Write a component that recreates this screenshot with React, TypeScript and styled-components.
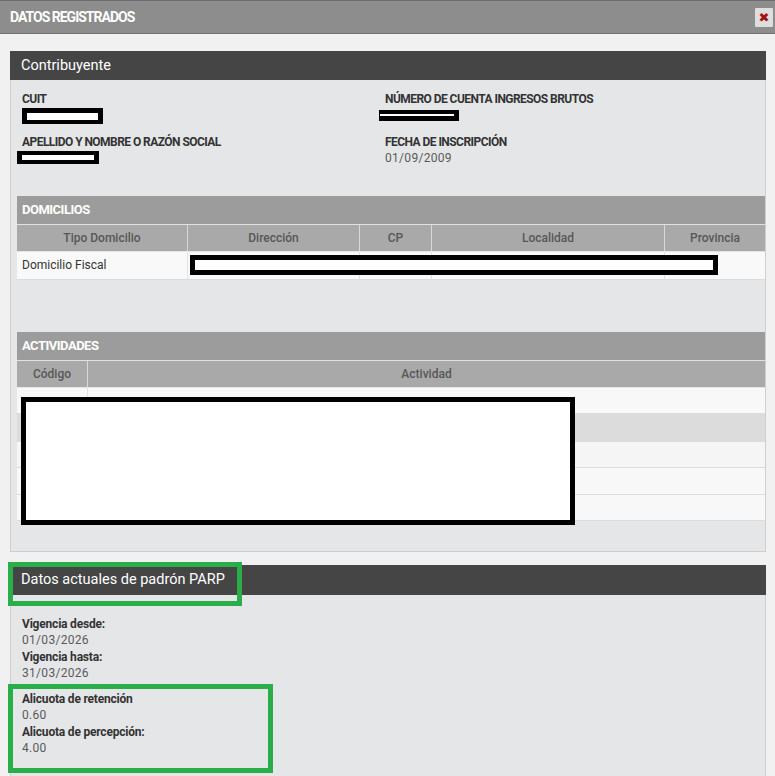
import styled, { createGlobalStyle } from "styled-components";

const GlobalStyle = createGlobalStyle`
  html, body {
    margin: 0;
    padding: 0;
    background: #f1f1f1;
  }
  body {
    font-family: Roboto, "Noto Sans", "Liberation Sans", sans-serif;
  }
`;

const Page = styled.div`
  position: relative;
  width: 775px;
  min-height: 776px;
  overflow: hidden;
  background: #f1f1f1;
`;

const TitleBar = styled.div`
  height: 32px;
  display: flex;
  align-items: center;
  justify-content: space-between;
  padding: 0 2px 0 10px;
  background: #8d8d8d;
  border-top: 1px solid #6c6c6c;
  border-bottom: 1px solid #707070;
`;

const TitleText = styled.span`
  color: #fff;
  font-size: 14px;
  font-weight: 700;
  letter-spacing: -1px;
`;

const CloseButton = styled.button`
  width: 18px;
  height: 19px;
  padding: 0;
  border: none;
  border-radius: 1px;
  background: #dedede;
  color: #a51010;
  font-size: 13px;
  font-weight: 900;
  line-height: 19px;
  font-family: "DejaVu Sans", sans-serif;
  cursor: pointer;
`;

const Body = styled.div`
  padding: 17px 9px 0 10px;
`;

const Panel = styled.section<{ $gap?: number }>`
  margin-top: ${(p) => p.$gap ?? 0}px;
  border: 1px solid #cfcfcf;
  border-top: none;
  background: #e5e6e8;
`;

const PanelHeader = styled.div<{ $h: number }>`
  height: ${(p) => p.$h}px;
  display: flex;
  align-items: center;
  padding-left: 11px;
  margin: 0 -1px;
  background: #454545;
  color: #fff;
  font-size: 14.5px;
`;

const PanelBody = styled.div<{ $pt: number; $pb: number }>`
  padding: ${(p) => p.$pt}px 0 ${(p) => p.$pb}px;
`;

const FieldGrid = styled.div`
  display: grid;
  grid-template-columns: 363px 1fr;
  row-gap: 10px;
  padding-left: 11px;
`;

const Field = styled.div`
  display: flex;
  flex-direction: column;
`;

const Label = styled.div<{ $caps?: boolean }>`
  font-size: 12px;
  font-weight: 700;
  color: #333;
  line-height: 16.5px;
  letter-spacing: ${(p) => (p.$caps ? "-0.55px" : "-0.2px")};
`;

const Value = styled.div`
  font-size: 12px;
  color: #5a5a5a;
  line-height: 16.5px;
  letter-spacing: 0.3px;
`;

const Redaction = styled.div<{ $w: number; $h: number; $x?: number; $y?: number; $b?: string }>`
  box-sizing: border-box;
  width: ${(p) => p.$w}px;
  height: ${(p) => p.$h}px;
  margin-left: ${(p) => p.$x ?? 0}px;
  margin-top: ${(p) => p.$y ?? 0}px;
  background: #fff;
  border-style: solid;
  border-color: #000;
  border-width: ${(p) => p.$b ?? "5px"};
`;

const Overlay = styled(Redaction)<{ $left: number; $top: number }>`
  position: absolute;
  left: ${(p) => p.$left}px;
  top: ${(p) => p.$top}px;
  margin: 0;
`;

const SubSection = styled.div<{ $gap: number }>`
  position: relative;
  margin: ${(p) => p.$gap}px 0 0 6px;
`;

const SubHeader = styled.div`
  height: 28px;
  display: flex;
  align-items: center;
  padding-left: 5px;
  background: #9c9c9c;
  color: #fff;
  font-size: 13px;
  font-weight: 700;
  letter-spacing: -0.5px;
  border-bottom: 1px solid #e2e2e2;
`;

const Table = styled.table`
  width: 100%;
  border-collapse: collapse;
  table-layout: fixed;
`;

const Th = styled.th<{ $w?: number }>`
  width: ${(p) => (p.$w ? `${p.$w}px` : "auto")};
  height: 26px;
  padding: 0;
  background: #a9a9a9;
  color: #575757;
  font-size: 12px;
  font-weight: 500;
  text-align: center;
  border-left: 1px solid #d8d8d8;
  border-bottom: 1px solid #e6e6e6;
  &:first-child {
    border-left: none;
  }
`;

const Row = styled.tr<{ $bg?: string }>`
  background: ${(p) => p.$bg ?? "#f9f9f9"};
`;

const Td = styled.td<{ $h?: number }>`
  height: ${(p) => p.$h ?? 26}px;
  padding: 0 0 0 5px;
  font-size: 12px;
  color: #333;
  border-left: 1px solid #e3e3e3;
  border-bottom: 1px solid #dcdcdc;
  &:first-child {
    border-left: none;
  }
`;

const InfoGroup = styled.div<{ $gap?: number }>`
  margin-top: ${(p) => p.$gap ?? 0}px;
  padding-left: 11px;
`;

const Highlight = styled.div<{ $left: number; $top: number; $w: number; $h: number }>`
  position: absolute;
  box-sizing: border-box;
  left: ${(p) => p.$left}px;
  top: ${(p) => p.$top}px;
  width: ${(p) => p.$w}px;
  height: ${(p) => p.$h}px;
  border: 5px solid #2aae4a;
  pointer-events: none;
`;

const activityRows = [
  { bg: "#f8f8f8", h: 25 },
  { bg: "#dcdcdc", h: 27 },
  { bg: "#f5f5f5", h: 25 },
  { bg: "#f8f8f8", h: 26 },
  { bg: "#f8f8f8", h: 25 },
];

export default function App() {
  return (
    <>
      <GlobalStyle />
      <Page>
        <TitleBar>
          <TitleText>DATOS REGISTRADOS</TitleText>
          <CloseButton aria-label="Cerrar">✖</CloseButton>
        </TitleBar>
        <Body>
          <Panel>
            <PanelHeader $h={29}>Contribuyente</PanelHeader>
            <PanelBody $pt={11} $pb={30}>
              <FieldGrid>
                <Field>
                  <Label $caps>CUIT</Label>
                  <Redaction $w={81} $h={16} $y={0} $b="5px 5px 4px 5px" />
                </Field>
                <Field>
                  <Label $caps>NÚMERO DE CUENTA INGRESOS BRUTOS</Label>
                  <Redaction $w={80} $h={11} $x={-6} $y={2} $b="4px 5px 5px 1px" />
                </Field>
                <Field>
                  <Label $caps>APELLIDO Y NOMBRE O RAZÓN SOCIAL</Label>
                  <Redaction $w={82} $h={13} $x={-5} $y={1} $b="4px 5px 4px 5px" />
                </Field>
                <Field>
                  <Label $caps>FECHA DE INSCRIPCIÓN</Label>
                  <Value>01/09/2009</Value>
                </Field>
              </FieldGrid>

              <SubSection $gap={29}>
                <SubHeader>DOMICILIOS</SubHeader>
                <Table>
                  <thead>
                    <tr>
                      <Th $w={170}>Tipo Domicilio</Th>
                      <Th $w={171}>Dirección</Th>
                      <Th $w={71}>CP</Th>
                      <Th $w={232}>Localidad</Th>
                      <Th>Provincia</Th>
                    </tr>
                  </thead>
                  <tbody>
                    <Row>
                      <Td $h={27}>Domicilio Fiscal</Td>
                      <Td $h={27} />
                      <Td $h={27} />
                      <Td $h={27} />
                      <Td $h={27} />
                    </Row>
                  </tbody>
                </Table>
                <Overlay $left={173} $top={59} $w={528} $h={20} $b="5px" />
              </SubSection>

              <SubSection $gap={52}>
                <SubHeader>ACTIVIDADES</SubHeader>
                <Table>
                  <thead>
                    <tr>
                      <Th $w={70}>Código</Th>
                      <Th>Actividad</Th>
                    </tr>
                  </thead>
                  <tbody>
                    {activityRows.map((r, i) => (
                      <Row key={i} $bg={r.bg}>
                        <Td $h={r.h} />
                        <Td $h={r.h} />
                      </Row>
                    ))}
                  </tbody>
                </Table>
                <Overlay $left={4} $top={65} $w={554} $h={128} $b="5px" />
              </SubSection>
            </PanelBody>
          </Panel>

          <Panel $gap={13}>
            <PanelHeader $h={30}>Datos actuales de padrón PARP</PanelHeader>
            <PanelBody $pt={21} $pb={40}>
              <InfoGroup>
                <Label>Vigencia desde:</Label>
                <Value>01/03/2026</Value>
                <Label>Vigencia hasta:</Label>
                <Value>31/03/2026</Value>
              </InfoGroup>
              <InfoGroup $gap={9}>
                <Label>Alicuota de retención</Label>
                <Value>0.60</Value>
                <Label>Alicuota de percepción:</Label>
                <Value>4.00</Value>
              </InfoGroup>
            </PanelBody>
          </Panel>
        </Body>

        <Highlight $left={8} $top={562} $w={234} $h={44} />
        <Highlight $left={8} $top={684} $w={265} $h={89} />
      </Page>
    </>
  );
}
